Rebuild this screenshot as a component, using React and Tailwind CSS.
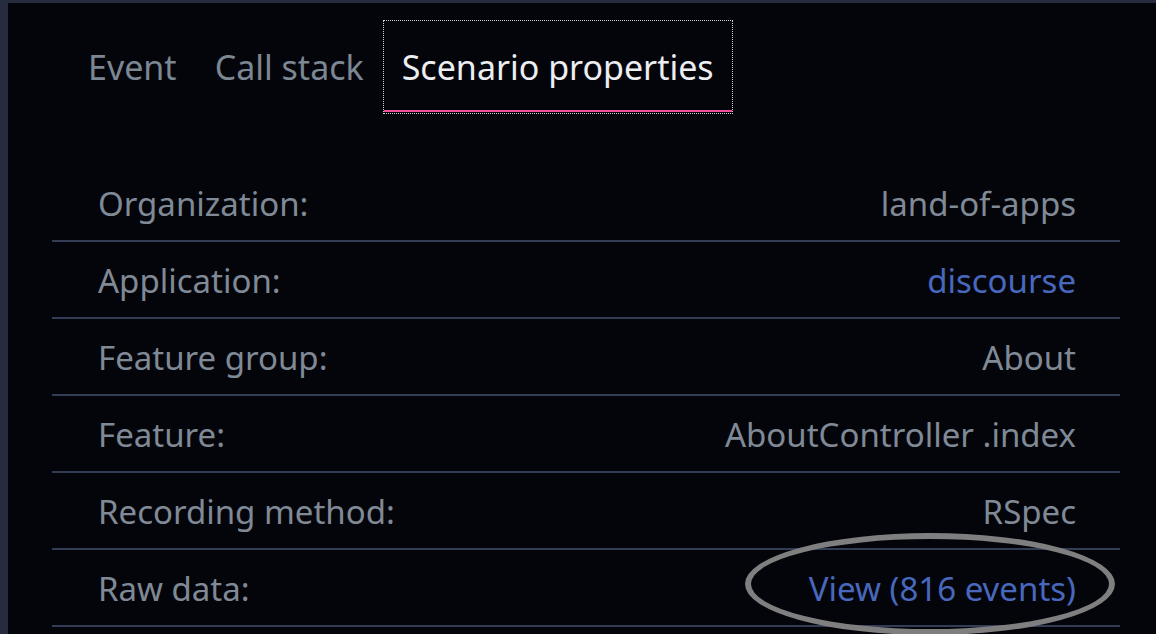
import React from "react";

const rows = [
  { label: "Organization:", value: "land-of-apps" },
  { label: "Application:", value: "discourse", link: true },
  { label: "Feature group:", value: "About" },
  { label: "Feature:", value: "AboutController .index" },
  { label: "Recording method:", value: "RSpec" },
  { label: "Raw data:", value: "View (816 events)", link: true, circled: true },
];

const tabs = ["Event", "Call stack", "Scenario properties"];

const App = () => {
  return (
    <div
      className="h-[634px] w-full overflow-hidden bg-[#04050a] border-l-8 border-t-[3px] border-[#262c3d] text-[33px]"
      style={{ fontFamily: '"Noto Sans", "Open Sans", sans-serif' }}
    >
      <div className="flex pl-[61px] pt-[17px] text-[34px]">
        {tabs.map((tab, i) => {
          const active = i === tabs.length - 1;
          return (
            <div
              key={tab}
              className={
                active
                  ? "relative flex h-[94px] items-center border border-dotted border-[#cfd2da] px-[18px] text-[#eceef2]"
                  : "flex h-[94px] items-center border border-transparent px-[18px] text-[#7c8794]"
              }
            >
              {tab}
              {active && (
                <div className="absolute bottom-[1px] left-0 right-0 h-[2px] bg-[#f0509a]" />
              )}
            </div>
          );
        })}
      </div>

      <div className="ml-[44px] mr-[36px] mt-[51px]">
        {rows.map((row) => (
          <div
            key={row.label}
            className="relative flex h-[77px] items-center justify-between border-b-2 border-[#333c55] pl-[46px] pr-[44px] pt-[2px]"
          >
            <span className="text-[#808a97]">{row.label}</span>
            <span className={row.link ? "text-[#4868be]" : "text-[#808a97]"}>
              {row.value}
            </span>
            {row.circled && (
              <div className="pointer-events-none absolute right-[5px] top-[-17px] h-[102px] w-[370px] rounded-[50%] border-[6px] border-[#7f7f7f]" />
            )}
          </div>
        ))}
      </div>
    </div>
  );
};

export default App;
